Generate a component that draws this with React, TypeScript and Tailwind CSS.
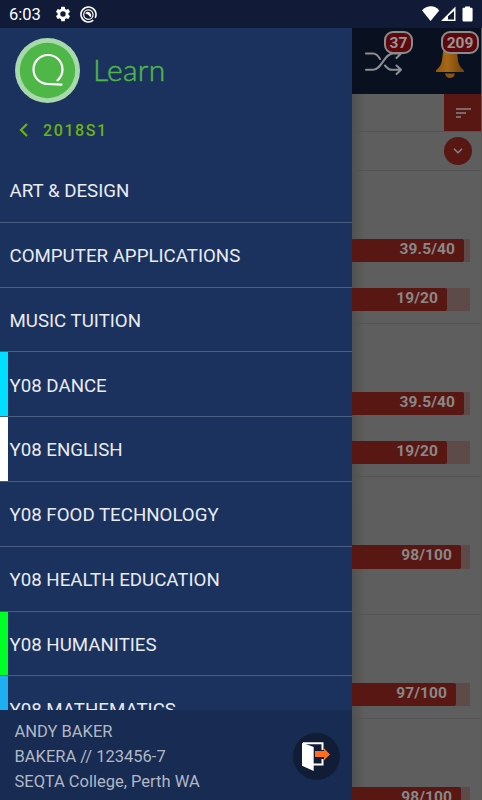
interface Subject {
  name: string;
  color?: string;
}

interface Assessment {
  id: number;
  className: string;
  results: { mark: string; width: string }[];
}

const subjects: Subject[] = [
  { name: 'ART & DESIGN' },
  { name: 'COMPUTER APPLICATIONS' },
  { name: 'MUSIC TUITION' },
  { name: 'Y08 DANCE', color: 'bg-[#00dfff]' },
  { name: 'Y08 ENGLISH', color: 'bg-white' },
  { name: 'Y08 FOOD TECHNOLOGY' },
  { name: 'Y08 HEALTH EDUCATION' },
  { name: 'Y08 HUMANITIES', color: 'bg-[#00ff26]' },
  { name: 'Y08 MATHEMATICS', color: 'bg-[#1eaef2]' },
];

const assessments: Assessment[] = [
  {
    id: 1,
    className: 'h-[153px] pt-[67.5px]',
    results: [
      { mark: '39.5/40', width: 'w-[112px]' },
      { mark: '19/20', width: 'w-[95px]' },
    ],
  },
  {
    id: 2,
    className: 'h-[153px] pt-[67.5px]',
    results: [
      { mark: '39.5/40', width: 'w-[112px]' },
      { mark: '19/20', width: 'w-[95px]' },
    ],
  },
  { id: 3, className: 'h-[137.5px] pt-[68px]', results: [{ mark: '98/100', width: 'w-[109px]' }] },
  { id: 4, className: 'h-[104.5px] pt-[68px]', results: [{ mark: '97/100', width: 'w-[104px]' }] },
  { id: 5, className: 'h-[104.5px] pt-[68px]', results: [{ mark: '98/100', width: 'w-[109px]' }] },
];

export default function App() {
  return (
    <div className="flex h-[800px] w-[482px] flex-col overflow-hidden bg-[#5e5e5e] font-['Roboto',sans-serif]">
      <StatusBar />
      <div className="flex min-h-0 flex-1">
        <Drawer />
        <Page />
      </div>
    </div>
  );
}

function StatusBar() {
  return (
    <div className="flex h-7 shrink-0 items-center bg-[#111b38] pl-[9px] pr-[6px] text-white">
      <span className="w-[45px] pt-[2px] text-[16.5px] leading-[26px]">6:03</span>
      <svg className="size-[18px]" viewBox="0 0 24 24" fill="currentColor">
        <path d="M19.14 12.94c.04-.3.06-.61.06-.94s-.02-.64-.07-.94l2.03-1.58a.49.49 0 0 0 .12-.61l-1.92-3.32a.49.49 0 0 0-.59-.22l-2.39.96a7 7 0 0 0-1.62-.94l-.36-2.54a.48.48 0 0 0-.48-.41h-3.84a.47.47 0 0 0-.47.41l-.36 2.54c-.59.24-1.13.57-1.62.94l-2.39-.96a.48.48 0 0 0-.59.22L2.74 8.87a.48.48 0 0 0 .12.61l2.03 1.58c-.05.3-.09.63-.09.94s.02.64.07.94l-2.03 1.58a.49.49 0 0 0-.12.61l1.92 3.32c.12.22.37.29.59.22l2.39-.96c.5.38 1.03.7 1.62.94l.36 2.54c.05.24.24.41.48.41h3.84c.24 0 .44-.17.47-.41l.36-2.54c.59-.24 1.13-.56 1.62-.94l2.39.96c.22.08.47 0 .59-.22l1.92-3.32a.48.48 0 0 0-.12-.61zM12 15.6A3.6 3.6 0 1 1 12 8.4a3.6 3.6 0 0 1 0 7.2" />
      </svg>
      <svg className="ml-[8px] size-[17px]" viewBox="0 0 17 17" fill="none" stroke="currentColor">
        <path d="M13.3 14.2A7.500 7.500 0 1 1 15.200 11.800" strokeWidth="1.600" />
        <path d="M13.100 8.800A4.700 4.700 0 1 1 8.400 3.900c2.800 0 4.700 2.200 4.700 4.900" strokeWidth="1.200" />
        <path d="M5 7.300q2.500-3 5-.5 1.500 1.500 1.300 4.200L10 10.700 8 8.600z" fill="currentColor" stroke="none" />
      </svg>
      <svg className="ml-auto h-[18px] w-[54px]" viewBox="0 0 54 18" fill="currentColor">
        <path d="M0 5.500C5-.1 13-.1 17.200 5.500L8.600 16z" />
        <path fillRule="evenodd" d="M19 16 33.500 1.500V16zm7-1.500h6V6l-6 5.300z" />
        <path d="M43 2.700V1.500h5v1.200h1.500q1.100 0 1.100 1.100v11.400q0 1.300-1.300 1.300h-7.500q-1.300 0-1.300-1.300V3.800q0-1.100 1.100-1.100z" />
      </svg>
    </div>
  );
}

function Drawer() {
  return (
    <aside className="flex w-[352px] shrink-0 flex-col bg-[#1b325f]">
      <div className="flex h-[84px] shrink-0 items-center pl-[15px]">
        <svg className="size-[65px]" viewBox="0 0 65 65" fill="none">
          <circle cx="32.5" cy="32.5" r="32.5" fill="#a7d9ad" />
          <circle cx="32.5" cy="32.5" r="27.7" fill="#4eb748" />
          <path
            d="M46.500 46.600 32.600 46a14.500 14.500 0 1 1 14.900-14.500c0 4.500-2 8.200-5 10.800"
            stroke="white"
            strokeWidth="2.200"
            strokeLinecap="round"
          />
        </svg>
        <span className="ml-[13px] pb-[2px] font-['Lato',sans-serif] text-[30px] font-light leading-9 tracking-[0.3px] text-[#4eb748] [-webkit-text-stroke:0.5px_#4eb748]">
          Learn
        </span>
      </div>
      <div className="flex h-[46px] shrink-0 items-start pl-[19px] pt-[8px] text-[#6bb310]">
        <svg className="mt-[3px] h-[14px] w-[9px]" viewBox="0 0 9 14" fill="none" stroke="currentColor" strokeWidth="2.200">
          <path d="M8 1 2 7l6 6" />
        </svg>
        <span className="ml-[15px] text-[16px] font-medium leading-[21px] tracking-[1.600px]">2018S1</span>
      </div>

      <ul className="min-h-0 flex-1 overflow-hidden">
        {subjects.map((subject) => (
          <li key={subject.name} className="flex h-[64.8px] items-stretch border-b border-[#4b5c82]">
            <span className={`w-2 ${subject.color ?? ''}`} />
            <span className="flex items-center pl-[1.500px] pt-[2.500px] text-[18.700px] text-[#e9ebef]">{subject.name}</span>
          </li>
        ))}
      </ul>

      <footer className="flex h-[90px] shrink-0 items-center justify-between bg-[#182b52] pl-[14.500px] pr-3">
        <div className="pt-[3px] text-[16.500px] leading-[25px] text-[#b2b8c5]">
          <p>ANDY BAKER</p>
          <p>BAKERA // 123456-7</p>
          <p>SEQTA College, Perth WA</p>
        </div>
        <button className="mt-[2px] flex size-[47px] items-center justify-center rounded-full bg-[#111c37]">
          <svg className="size-[47px]" viewBox="0 0 47 47" fill="none">
            <path d="M10 10.3h19.500V17M29.500 26v5.500H20" stroke="white" strokeWidth="2" />
            <path d="M9 9.700 20.700 14v24L9 32.800z" fill="white" />
            <path d="M22 18h9v-2.800l6 6.200-6 5.800V24h-9z" fill="#ff6f1b" />
          </svg>
        </button>
      </footer>
    </aside>
  );
}

function Page() {
  return (
    <main className="min-w-0 flex-1 overflow-hidden border-r border-[#6b5250] bg-[linear-gradient(to_right,#515151,#5e5e5e_14px)]">
      <header className="-mr-px flex h-[66px] bg-[#091020]">
        <div className="relative w-[65px]">
          <svg className="absolute left-[13px] top-[22px] h-[26px] w-[38px]" viewBox="0 0 38 26" fill="none" stroke="#8c8e92" strokeWidth="2" strokeLinecap="round" strokeLinejoin="round">
            <path d="M1 3.500h7q4 0 7 5.500M1 19.800h7c9 0 11-16.300 20-16.300h8M20 15.500q3.500 4.300 7 4.300h8M31.500-1 36 3.500 31.500 8M31.500 15.500 36 19.800 31.500 24" />
          </svg>
          <Badge className="left-[32px] w-[29px]">37</Badge>
        </div>
        <div className="relative flex-1">
          <svg className="absolute left-[18px] top-[17px] h-[35px] w-[30px]" viewBox="0 0 30 35">
            <defs>
              <linearGradient id="bell" x2="1">
                <stop stopColor="#8d560d" />
                <stop offset=".4" stopColor="#a66718" />
                <stop offset="1" stopColor="#704109" />
              </linearGradient>
            </defs>
            <path d="M10 28.500h10q-1 4.500-5 4.500t-5-4.500" fill="#8b530e" />
            <path d="M15 0C9 1 8 6 7.500 11 7 18 6 21 1 25.500V27h28v-1.500c-5-4.500-6-7.500-6.500-14.500C22 6 21 1 15 0" fill="url(#bell)" />
          </svg>
          <Badge className="left-[24px] w-[38px]">209</Badge>
        </div>
      </header>

      <div className="-mr-px flex h-[38px] justify-end border-b border-[#535353]">
        <div className="flex h-[37px] w-[38px] items-center justify-center bg-[#591713]">
          <svg className="h-[10px] w-[15px]" viewBox="0 0 15 10" stroke="#858585" strokeWidth="1.600">
            <path d="M0 1h15M0 5h10M0 9h5" />
          </svg>
        </div>
      </div>
      <div className="flex h-[39px] items-center justify-end border-b border-[#535353] pr-[9px]">
        <div className="flex size-7 items-center justify-center rounded-full bg-[#591713]">
          <svg className="h-[6px] w-[10px]" viewBox="0 0 10 6" fill="none" stroke="#858585" strokeWidth="1.500">
            <path d="m1 .8 4 4 4-4" />
          </svg>
        </div>
      </div>

      {assessments.map((item) => (
        <section key={item.id} className={`flex flex-col gap-[25.500px] border-b border-[#535353] ${item.className}`}>
          {item.results.map((result) => (
            <div key={result.mark} className="h-[23.500px] w-[118px] shrink-0 bg-[#5e4b49]">
              <div
                className={`h-full rounded-r-[2px] bg-[#591713] pr-[9px] text-right text-[15.500px] font-bold leading-[21px] tracking-[0.100px] text-[#888] ${result.width}`}
              >
                {result.mark}
              </div>
            </div>
          ))}
        </section>
      ))}
    </main>
  );
}

function Badge({ className, children }: { className: string; children: string }) {
  return (
    <span
      className={`absolute top-[3px] flex h-[23px] items-center justify-center rounded-[9px] border-2 border-[#8b8b8d] bg-[#5e080c] pt-[2px] text-[15.500px] font-bold text-[#969696] ${className}`}
    >
      {children}
    </span>
  );
}
